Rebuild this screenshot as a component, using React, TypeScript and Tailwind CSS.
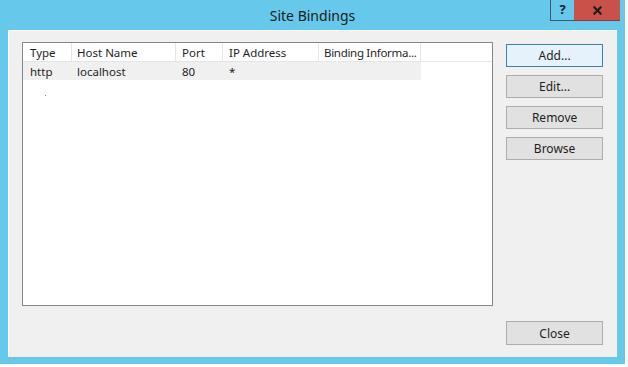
import { X } from 'lucide-react';

const columns = [
  { label: 'Type', w: 'w-[49px]', pad: 'pl-[7px]' },
  { label: 'Host Name', w: 'w-[104px]', pad: 'pl-[5px]' },
  { label: 'Port', w: 'w-[47px]', pad: 'pl-[6px]' },
  { label: 'IP Address', w: 'w-[96px]', pad: 'pl-[6px]' },
  { label: 'Binding Informa...', w: 'w-[102px]', pad: 'pl-[5px] tracking-[-0.3px]' },
];

const row = ['http', 'localhost', '80', '*', ''];

const sideButtons = ['Add...', 'Edit...', 'Remove', 'Browse'];

const App = () => {
  return (
    <div
      className="w-[628px] h-[367px] bg-white text-[#1e1e1e]"
      style={{ fontFamily: '"Noto Sans", "Open Sans", sans-serif' }}
    >
      <div className="w-[625px] h-[364px] bg-[#66c8ea] flex flex-col">
        {/* --- Title bar --- */}
        <div className="relative h-[30px] flex items-center justify-center">
          <span className="text-[14px] text-[#1c1c1c] leading-none pt-[2px]">Site Bindings</span>
          <div className="absolute top-0 right-[5px] flex">
            <div className="w-[24px] h-[21px] border-l border-b border-[#3f5a66] flex items-center justify-center text-[13px] font-bold text-[#1c1c1c]">
              ?
            </div>
            <div className="w-[46px] h-[21px] bg-[#c9514a] border-b border-[#8d3a35] flex items-center justify-center">
              <X size={13} strokeWidth={4} className="text-[#1c1c1c]" />
            </div>
          </div>
        </div>

        {/* --- Dialog body --- */}
        <div className="flex-1 mx-[8px] mb-[7px] bg-[#f0f0f0] border-l border-t border-[#fbfbfb] flex pl-[13px] pt-[11px] pr-[14px] pb-[12px] text-[12px]">
          <div className="relative w-[472px] h-[264px] bg-white border border-[#828790] text-[11.5px]">
            <div className="flex h-[19px] border-b border-[#e5e5e5]">
              {columns.map((c) => (
                <div
                  key={c.label}
                  className={`${c.w} ${c.pad} pt-[2px] flex items-center border-r border-[#e5e5e5] whitespace-nowrap overflow-hidden`}
                >
                  {c.label}
                </div>
              ))}
            </div>
            <div className="flex h-[18px] w-[398px] bg-[#f0f0f0]">
              {columns.map((c, i) => (
                <div key={c.label} className={`${c.w} ${c.pad} pt-[2px] flex items-center whitespace-nowrap`}>
                  {row[i]}
                </div>
              ))}
            </div>
            <div className="ml-[22px] mt-[15px] w-[1px] h-[1px] bg-[#8a8a8a]" />
          </div>

          <div className="ml-[13px] w-[97px] flex flex-col">
            <div className="flex flex-col gap-[8px] pt-[2px]">
              {sideButtons.map((b, i) => (
                <button
                  key={b}
                  className={`h-[23px] w-full border flex items-center justify-center pt-[1px] text-[12px] ${
                    i === 0 ? 'bg-[#e5f1fb] border-[#3c7fb1]' : 'bg-[#e1e1e1] border-[#adadad]'
                  }`}
                >
                  {b}
                </button>
              ))}
            </div>
            <button className="mt-auto h-[24px] w-full border border-[#adadad] bg-[#e1e1e1] flex items-center justify-center pt-[1px] text-[12px]">
              Close
            </button>
          </div>
        </div>
      </div>
    </div>
  );
};

export default App;
